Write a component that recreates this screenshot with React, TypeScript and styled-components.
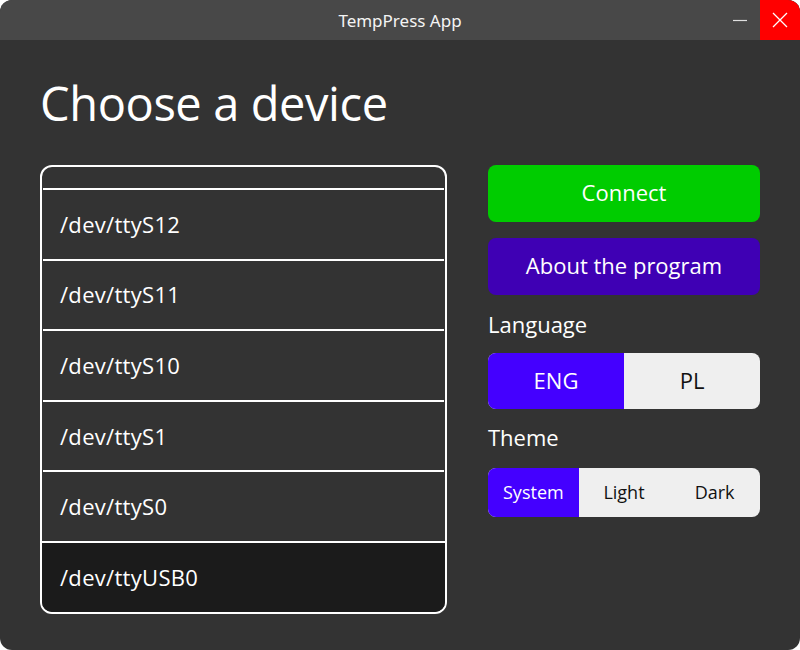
import React from "react";
import styled, { createGlobalStyle } from "styled-components";

const Global = createGlobalStyle`
  html, body { margin: 0; padding: 0; background: #ffffff; }
  * { box-sizing: border-box; }
`;

const Window = styled.div`
  width: 800px;
  height: 650px;
  border-radius: 12px;
  overflow: hidden;
  background: #333333;
  display: flex;
  flex-direction: column;
  font-family: "Open Sans", "Noto Sans", sans-serif;
  color: #ffffff;
`;

const TitleBar = styled.div`
  height: 40px;
  flex: none;
  background: #484848;
  display: grid;
  grid-template-columns: 80px 1fr 80px;
  align-items: stretch;
`;

const TitleText = styled.div`
  grid-column: 2;
  display: flex;
  align-items: center;
  justify-content: center;
  font-family: "Noto Sans", sans-serif;
  font-size: 17px;
  color: #f4f4f4;
`;

const Controls = styled.div`
  display: flex;
`;

const CtrlButton = styled.div<{ $close?: boolean }>`
  width: 40px;
  height: 40px;
  display: flex;
  align-items: center;
  justify-content: center;
  background: ${(p) => (p.$close ? "#ff0000" : "transparent")};
`;

const Content = styled.div`
  flex: 1;
  padding: 0 40px;
  display: flex;
  flex-direction: column;
`;

const Heading = styled.h1`
  margin: 0;
  padding-top: 33px;
  height: 125px;
  font-size: 47px;
  font-weight: 400;
  line-height: 60px;
  letter-spacing: -0.4px;
`;

const Main = styled.div`
  display: grid;
  grid-template-columns: 407px 272px;
  column-gap: 41px;
  align-items: start;
`;

const List = styled.div`
  height: 449px;
  border: 2px solid #ffffff;
  border-radius: 12px;
  overflow: hidden;
  display: flex;
  flex-direction: column;
`;

const TopStub = styled.div`
  height: 21px;
  flex: none;
`;

const Row = styled.div<{ $selected?: boolean }>`
  height: 70.6px;
  flex: none;
  border-top: 2px solid #ffffff;
  margin: 0 1px;
  display: flex;
  align-items: center;
  padding-left: 17px;
  padding-bottom: 1px;
  font-size: 22px;
  letter-spacing: 0.3px;
  background: ${(p) => (p.$selected ? "#1b1b1b" : "transparent")};
  &:last-child {
    flex: 1;
    margin: 0;
    padding-left: 18px;
  }
`;

const Side = styled.div`
  display: flex;
  flex-direction: column;
`;

const Button = styled.div<{ $bg: string; $mt?: number }>`
  height: 57px;
  margin-top: ${(p) => p.$mt ?? 0}px;
  border-radius: 8px;
  background: ${(p) => p.$bg};
  display: flex;
  align-items: center;
  justify-content: center;
  padding-bottom: 3px;
  font-size: 22px;
`;

const Label = styled.div<{ $mt: number }>`
  margin-top: ${(p) => p.$mt}px;
  height: 26px;
  line-height: 22px;
  font-size: 22px;
`;

const Segmented = styled.div<{ $h: number; $cols: number; $mt: number }>`
  margin-top: ${(p) => p.$mt}px;
  height: ${(p) => p.$h}px;
  border-radius: 8px;
  overflow: hidden;
  background: #efefef;
  display: grid;
  grid-template-columns: repeat(${(p) => p.$cols}, 1fr);
`;

const Segment = styled.div<{ $active?: boolean; $size: number }>`
  display: flex;
  align-items: center;
  justify-content: center;
  padding-bottom: 2px;
  font-size: ${(p) => p.$size}px;
  background: ${(p) => (p.$active ? "#4400ff" : "transparent")};
  color: ${(p) => (p.$active ? "#ffffff" : "#111111")};
`;

const devices = ["/dev/ttyS12", "/dev/ttyS11", "/dev/ttyS10", "/dev/ttyS1", "/dev/ttyS0", "/dev/ttyUSB0"];

export default function App() {
  return (
    <>
      <Global />
      <Window>
        <TitleBar>
          <TitleText>TempPress App</TitleText>
          <Controls>
            <CtrlButton>
              <svg width="16" height="16" viewBox="0 0 16 16">
                <line x1="1" y1="8.5" x2="15" y2="8.5" stroke="#e0e0e0" strokeWidth="1.2" />
              </svg>
            </CtrlButton>
            <CtrlButton $close>
              <svg width="16" height="16" viewBox="0 0 16 16">
                <path d="M1 1 L15 15 M15 1 L1 15" stroke="#ffffff" strokeWidth="1.3" />
              </svg>
            </CtrlButton>
          </Controls>
        </TitleBar>
        <Content>
          <Heading>Choose a device</Heading>
          <Main>
            <List>
              <TopStub />
              {devices.map((d, i) => (
                <Row key={d} $selected={i === devices.length - 1}>
                  {d}
                </Row>
              ))}
            </List>
            <Side>
              <Button $bg="#00cc00">Connect</Button>
              <Button $bg="#3f00b4" $mt={16}>About the program</Button>
              <Label $mt={18}>Language</Label>
              <Segmented $h={56} $cols={2} $mt={14}>
                <Segment $active $size={22}>ENG</Segment>
                <Segment $size={22}>PL</Segment>
              </Segmented>
              <Label $mt={17}>Theme</Label>
              <Segmented $h={49} $cols={3} $mt={16}>
                <Segment $active $size={18}>System</Segment>
                <Segment $size={18}>Light</Segment>
                <Segment $size={18}>Dark</Segment>
              </Segmented>
            </Side>
          </Main>
        </Content>
      </Window>
    </>
  );
}
